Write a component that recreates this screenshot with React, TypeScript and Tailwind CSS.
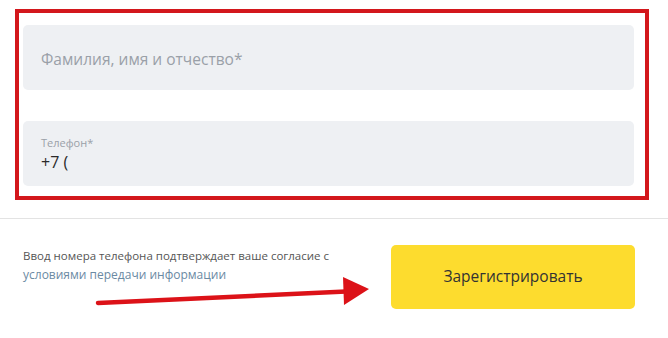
export default function App() {
    return (
        <div className="relative w-[668px] h-[338px] bg-white overflow-hidden" style={{ fontFamily: '"Open Sans", "Noto Sans", sans-serif' }}>
            <div className="ml-[15px] mt-[9px] w-[634px] border-[4px] border-[#d3171c] pt-[12px] pb-[10px] pl-[4px] pr-[11px] flex flex-col gap-[31px]">
                <div className="h-[65px] rounded-[5px] bg-[#eef0f3] flex items-center px-[18px] pt-[4px]">
                    <span className="text-[15.5px] text-[#9aa0a8]">Фамилия, имя и отчество*</span>
                </div>
                <div className="h-[65px] rounded-[5px] bg-[#eef0f3] flex flex-col justify-center px-[18px]">
                    <span className="text-[11px] leading-[16px] text-[#9aa0a8]">Телефон*</span>
                    <span className="text-[16px] leading-[22px] text-[#2a2a2a]">+7 (</span>
                </div>
            </div>

            <div className="mt-[18px] border-t border-[#e3e3e3] flex items-start justify-between pl-[23px] pr-[33px] pt-[26px]">
                <p className="text-[11.5px] leading-[19px] text-[#555] mt-[1px]">
                    Ввод номера телефона подтверждает ваше согласие с<br />
                    <span className="text-[#6b8aa3] text-[12px]">условиями передачи информации</span>
                </p>
                <button className="w-[244px] h-[64px] rounded-[5px] bg-[#fddc2e] text-[15.5px] text-[#333]">
                    Зарегистрировать
                </button>
            </div>

            <svg className="absolute left-0 top-0 pointer-events-none" width="668" height="338">
                <line x1="98" y1="303" x2="346" y2="291.5" stroke="#dc1218" strokeWidth="4.5" strokeLinecap="round" />
                <polygon points="343,277 369,289 344,305" fill="#dc1218" />
            </svg>
        </div>
    )
}
